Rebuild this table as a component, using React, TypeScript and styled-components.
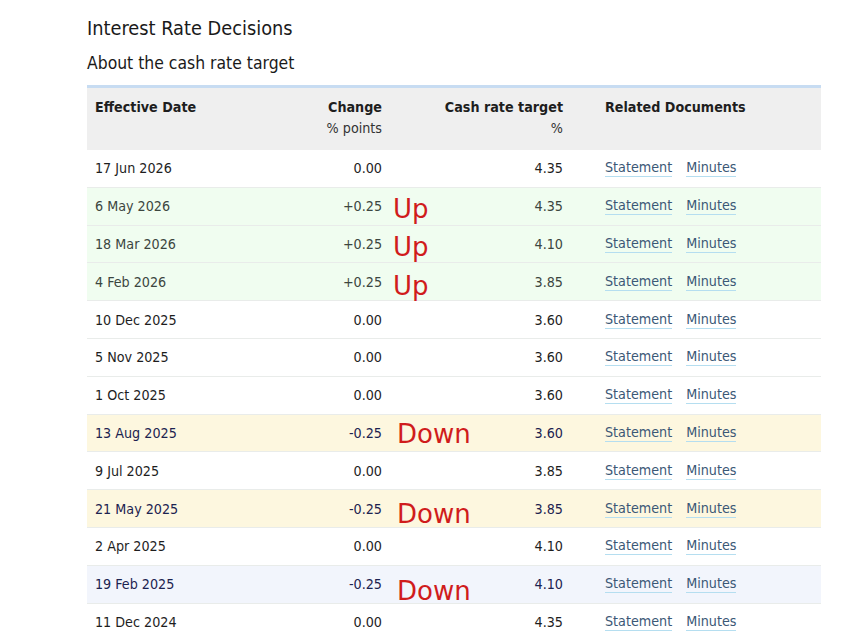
import styled, { createGlobalStyle } from 'styled-components';

type Tone = 'plain' | 'up' | 'down' | 'cool';

interface Decision {
  date: string;
  change: string;
  rate: string;
  tone: Tone;
  note?: string;
  // where the hand-placed annotation sits relative to the row middle
  noteX?: number;
  noteY?: number;
}

const decisions: Decision[] = [
  { date: '17 Jun 2026', change: '0.00', rate: '4.35', tone: 'plain' },
  { date: '6 May 2026', change: '+0.25', rate: '4.35', tone: 'up', note: 'Up', noteX: 0, noteY: 3 },
  { date: '18 Mar 2026', change: '+0.25', rate: '4.10', tone: 'up', note: 'Up', noteX: 0, noteY: 3 },
  { date: '4 Feb 2026', change: '+0.25', rate: '3.85', tone: 'up', note: 'Up', noteX: 0, noteY: 4 },
  { date: '10 Dec 2025', change: '0.00', rate: '3.60', tone: 'plain' },
  { date: '5 Nov 2025', change: '0.00', rate: '3.60', tone: 'plain' },
  { date: '1 Oct 2025', change: '0.00', rate: '3.60', tone: 'plain' },
  { date: '13 Aug 2025', change: '-0.25', rate: '3.60', tone: 'down', note: 'Down', noteX: 4, noteY: 1 },
  { date: '9 Jul 2025', change: '0.00', rate: '3.85', tone: 'plain' },
  { date: '21 May 2025', change: '-0.25', rate: '3.85', tone: 'down', note: 'Down', noteX: 4, noteY: 5 },
  { date: '2 Apr 2025', change: '0.00', rate: '4.10', tone: 'plain' },
  { date: '19 Feb 2025', change: '-0.25', rate: '4.10', tone: 'cool', note: 'Down', noteX: 4, noteY: 7 },
  { date: '11 Dec 2024', change: '0.00', rate: '4.35', tone: 'plain' },
];

const rowBg: Record<Tone, string> = {
  plain: '#ffffff',
  up: '#f0fdf0',
  down: '#fdf7df',
  cool: '#f2f5fc',
};

const rowInk: Record<Tone, string> = {
  plain: '#1e1e1e',
  up: '#3c4640',
  down: '#1c2350',
  cool: '#1c2350',
};

export default function App() {
  return (
    <>
      <GlobalStyle />
      <Page>
        <Title>Interest Rate Decisions</Title>
        <Subtitle>About the cash rate target</Subtitle>
        <Table>
          <thead>
            <HeadRow>
              <HeadCell>Effective Date</HeadCell>
              <HeadCell $align="right">
                Change
                <Unit>% points</Unit>
              </HeadCell>
              <HeadCell $align="right" $padRight={34}>
                Cash rate target
                <Unit>%</Unit>
              </HeadCell>
              <HeadCell>Related Documents</HeadCell>
            </HeadRow>
          </thead>
          <tbody>
            {decisions.map((d) => (
              <Row key={d.date} $tone={d.tone}>
                <Cell>{d.date}</Cell>
                <Cell $align="right">{d.change}</Cell>
                <RateCell>
                  <RateInner>
                    <Note style={{ transform: `translate(${d.noteX ?? 0}px, ${d.noteY ?? 0}px)` }}>
                      {d.note}
                    </Note>
                    <span>{d.rate}</span>
                  </RateInner>
                </RateCell>
                <Cell>
                  <Docs>
                    <DocLink href="#">Statement</DocLink>
                    <DocLink href="#">Minutes</DocLink>
                  </Docs>
                </Cell>
              </Row>
            ))}
          </tbody>
        </Table>
      </Page>
    </>
  );
}

const GlobalStyle = createGlobalStyle`
  html, body {
    margin: 0;
    background: #ffffff;
  }
  body {
    font-family: "DejaVu Sans Condensed", "DejaVu Sans", sans-serif;
    color: #1e1e1e;
  }
`;

const Page = styled.div`
  padding: 16px 0 0 87px;
  width: 734px;
`;

const Title = styled.h1`
  margin: 0;
  font-size: 19.8px;
  font-weight: normal;
  line-height: 26px;
  color: #1a1a1a;
`;

const Subtitle = styled.h2`
  margin: 9px 0 0;
  font-size: 17.4px;
  font-weight: normal;
  line-height: 24px;
  color: #1a1a1a;
`;

const Table = styled.table`
  margin-top: 10px;
  width: 734px;
  border-collapse: collapse;
  border-top: 3px solid #c7dcf2;
  font-size: 14.2px;
  table-layout: fixed;
`;

const HeadRow = styled.tr`
  background: #efefef;
  height: 63px;
`;

const HeadCell = styled.th<{ $align?: 'left' | 'right'; $padRight?: number }>`
  text-align: ${(p) => p.$align ?? 'left'};
  vertical-align: top;
  padding: 9px ${(p) => p.$padRight ?? 8}px 0 8px;
  font-weight: bold;
  line-height: 20.5px;
  color: #1e1e1e;

  &:nth-child(1) { width: 152px; }
  &:nth-child(2) { width: 119px; }
  &:nth-child(3) { width: 165px; }
`;

const Unit = styled.div`
  font-weight: normal;
  color: #333333;
`;

const Row = styled.tr<{ $tone: Tone }>`
  background: ${(p) => rowBg[p.$tone]};
  color: ${(p) => rowInk[p.$tone]};
  height: 37.8px;
  border-bottom: 1px solid #e9ecea;
`;

const Cell = styled.td<{ $align?: 'left' | 'right' }>`
  text-align: ${(p) => p.$align ?? 'left'};
  padding: 0 8px;
  vertical-align: middle;
`;

const RateCell = styled.td`
  padding: 0 34px 0 3px;
  vertical-align: middle;
`;

const RateInner = styled.div`
  display: flex;
  justify-content: space-between;
  align-items: center;
`;

const Note = styled.span`
  font-family: "DejaVu Sans", sans-serif;
  font-size: 26px;
  line-height: 28px;
  color: #d01c1c;
`;

const Docs = styled.div`
  display: flex;
  gap: 14px;
`;

const DocLink = styled.a`
  color: #3b5876;
  text-decoration: none;
  border-bottom: 1px solid #b5def0;
  line-height: 17px;
`;
